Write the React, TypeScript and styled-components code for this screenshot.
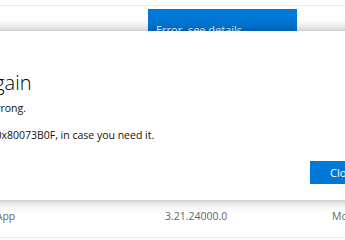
import React from "react";
import styled, { createGlobalStyle } from "styled-components";

const GlobalStyle = createGlobalStyle`
  html, body {
    margin: 0;
    padding: 0;
    background: #fff;
    overflow: hidden;
  }
  body {
    width: 345px;
    height: 240px;
    font-family: "Segoe UI", "Open Sans", "Noto Sans", sans-serif;
  }
`;

const Page = styled.div`
  width: 345px;
  height: 240px;
  display: flex;
  flex-direction: column;
  overflow: hidden;
`;

const TopRow = styled.div`
  height: 26px;
  margin-top: 5px;
  border-top: 1px solid #e8e8e8;
  box-sizing: border-box;
  display: flex;
  padding-left: 148px;
  padding-top: 3px;
`;

const StatusBox = styled.div`
  width: 149px;
  height: 30px;
  flex: none;
  background: #0078d7;
  color: #fff;
  font-size: 11px;
  padding: 13px 0 0 8px;
  box-sizing: border-box;
`;

const Dialog = styled.div`
  position: relative;
  z-index: 1;
  height: 169px;
  flex: none;
  margin-left: -110px;
  margin-right: -80px;
  background: #fff;
  box-shadow: 0 0 12px rgba(0, 0, 0, 0.35);
  padding: 40px 0 0 20px;
  box-sizing: border-box;
  display: flex;
  flex-direction: column;
`;

const Title = styled.h1`
  margin: 0;
  font-size: 20px;
  font-weight: 300;
  line-height: 24px;
  color: #000;
  white-space: nowrap;
`;

const Message = styled.p<{ gap: number }>`
  margin: ${(p) => p.gap}px 0 0;
  font-size: 10.5px;
  line-height: 14px;
  color: #111;
  white-space: nowrap;
`;

const Actions = styled.div`
  display: flex;
  justify-content: flex-end;
  margin-top: 19px;
`;

const CloseButton = styled.button`
  width: 115px;
  height: 23px;
  border: none;
  background: #0078d7;
  color: #fff;
  font-family: inherit;
  font-size: 11px;
  text-align: left;
  padding: 0 0 0 20px;
`;

const BottomRow = styled.div`
  flex: 1;
  display: flex;
  align-items: flex-start;
  margin-left: -82px;
  padding-top: 5px;
  border-bottom: 1px solid #e8e8e8;
  margin-bottom: 2px;
  font-size: 10.5px;
  color: #666;
`;

const Cell = styled.span<{ w: number }>`
  width: ${(p) => p.w}px;
  flex: none;
  white-space: nowrap;
  margin-top: 4px;
`;

export default function App() {
  return (
    <Page>
      <GlobalStyle />
      <TopRow>
        <StatusBox>Error, see details</StatusBox>
      </TopRow>
      <Dialog>
        <Title>Try that again</Title>
        <Message gap={6}>Something went wrong.</Message>
        <Message gap={13}>The error code is 0x80073B0F, in case you need it.</Message>
        <Actions>
          <CloseButton>Close</CloseButton>
        </Actions>
      </Dialog>
      <BottomRow>
        <Cell w={247}>Microsoft Store App</Cell>
        <Cell w={167}>3.21.24000.0</Cell>
        <Cell w={60}>Modern</Cell>
      </BottomRow>
    </Page>
  );
}
